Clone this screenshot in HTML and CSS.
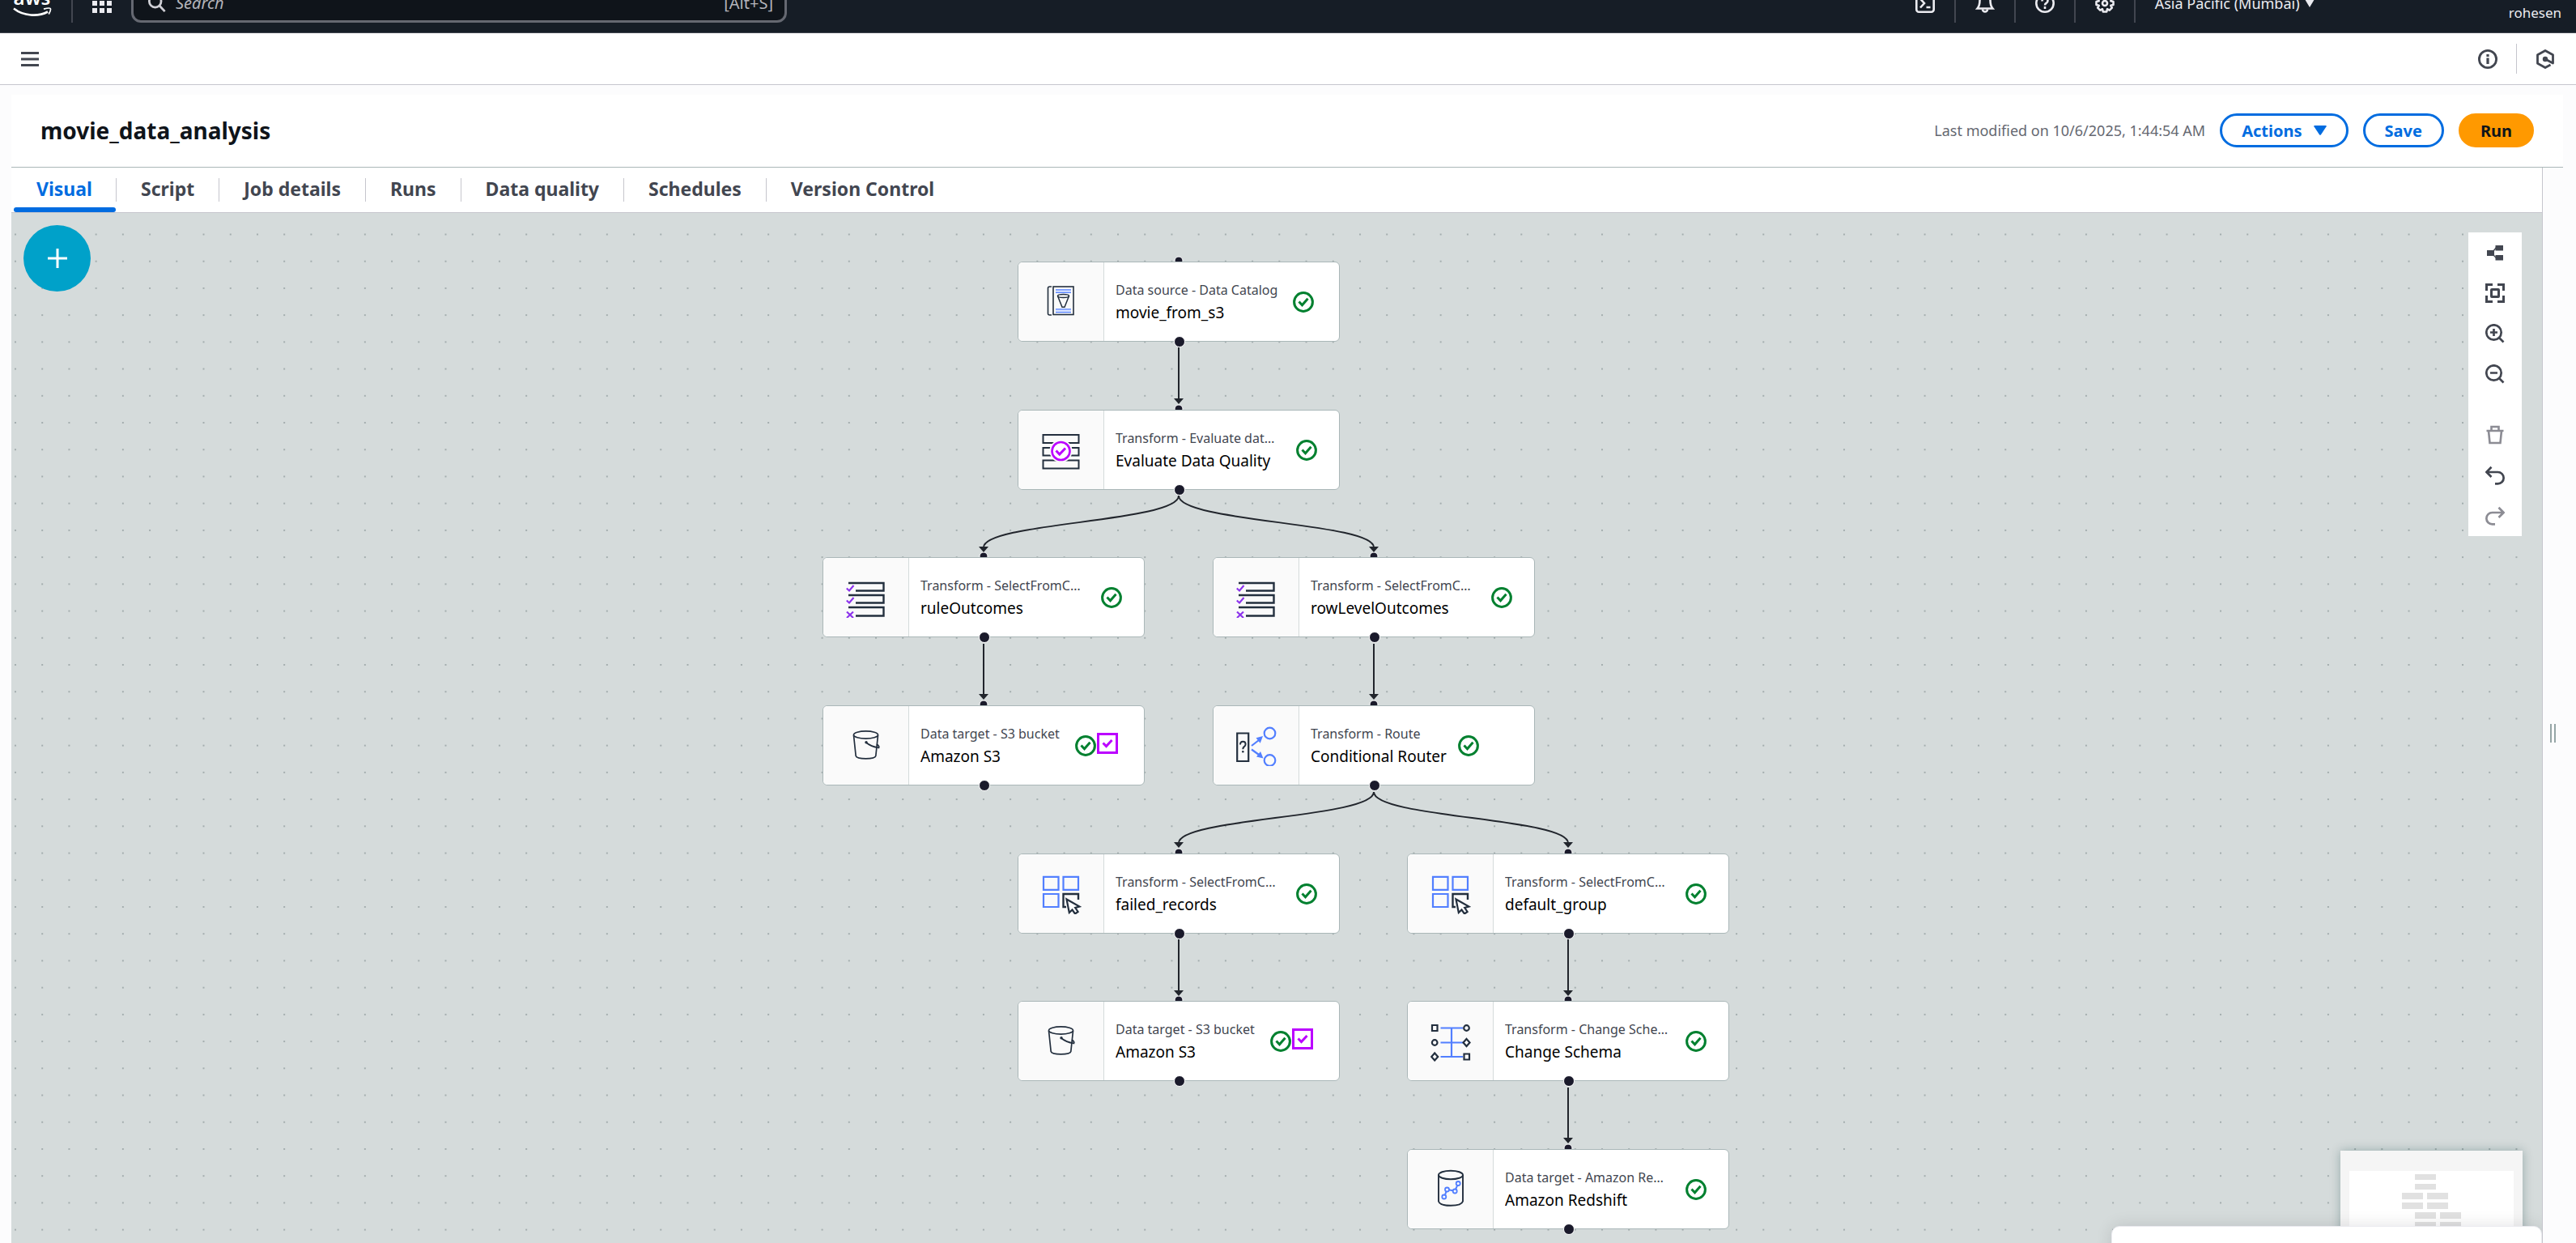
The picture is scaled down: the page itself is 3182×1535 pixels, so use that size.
FILE: index.html
```html
<!DOCTYPE html>
<html lang="en">
<head>
<meta charset="utf-8">
<title>movie_data_analysis</title>
<link rel="stylesheet" href="styles.css">
</head>
<body>
<svg class="defs" aria-hidden="true">
  <symbol id="ok" viewBox="0 0 26 26"><circle cx="13" cy="13" r="11.4" fill="none" stroke="#00802f" stroke-width="3"/><path d="M7.5 12.5l4 4.2 7-8" fill="none" stroke="#00802f" stroke-width="3"/></symbol>
  <symbol id="quality" viewBox="0 0 26 26"><rect x="1.5" y="1.5" width="23" height="23" fill="none" stroke="#b0f" stroke-width="3"/><path d="M7.5 12.5l4 4 7-7.5" fill="none" stroke="#b0f" stroke-width="3"/></symbol>
  <symbol id="catalog" viewBox="0 0 50 50"><g fill="none" stroke="#232f3e" stroke-width="1.6"><path d="M13 6h-2.500q-2 0-2 2v31q0 2 2 2H13"/><rect x="15" y="6" width="25" height="34.500"/></g><path d="M18 9.500h19v4H18zM18 34h19v3.500H18z" fill="#dbe5ff"/><path d="M18 9.800h19M18 13.400h19M18 33.800h19M18 37.600h19" stroke="#527fff" stroke-width="1.300"/><g fill="none" stroke="#232f3e" stroke-width="1.500"><ellipse cx="27.500" cy="17.500" rx="7" ry="2"/><path d="M20.500 17.500l5.500 13.700h3l5.500-13.700"/></g></symbol>
  <symbol id="evaluate" viewBox="0 0 50 50"><g fill="none" stroke="#232f3e" stroke-width="2"><path d="M2.500 6h44v10h-44zM2.500 22h44v9.500h-44zM2.500 37.500h44V47.500h-44z"/></g><circle cx="24.500" cy="26" r="14" fill="#fafafa"/><circle cx="24.500" cy="26" r="11" fill="#fff" stroke="#b0f" stroke-width="2.600"/><path d="M18.500 25.500l4.300 4.500 7.200-7.500" fill="none" stroke="#b0f" stroke-width="3"/></symbol>
  <symbol id="rules" viewBox="0 0 50 50"><g fill="none" stroke="#232f3e" stroke-width="2.400"><path d="M3 7h43.500v9.500H12M3 22h43.500v9.500H12M3 37h43.500v10.500H12"/></g><g fill="none" stroke="#8c33ec" stroke-width="2.200"><path d="M.8 13.500l3.200 3 5.500-6.500M.8 28.500l3.200 3 5.500-6.500M1 42.500l8 7.500M9 42.500l-8 7.500"/></g></symbol>
  <symbol id="bucket" viewBox="0 0 50 50"><g fill="none" stroke="#232f3e" stroke-width="1.700"><ellipse cx="24.500" cy="11.500" rx="15" ry="4.600"/><path d="M9.500 12l2.700 25.500q1 3.300 12.300 3.300t12.300-3.300L39.500 12"/><path d="M25 21c4 3.500 9 5.500 15.500 6.500q1.200-1.800-2.500-4.500"/></g><circle cx="25" cy="20.800" r="1.700" fill="#232f3e"/></symbol>
  <symbol id="router" viewBox="0 0 50 50"><path d="M1.200 9.500h14v34.500h-14z" fill="none" stroke="#232f3e" stroke-width="2.200"/><path d="M5 23.500q0-3.800 3.300-3.800t3.300 3.300q0 2-1.800 3.200-1.500 1-1.500 3" fill="none" stroke="#232f3e" stroke-width="2"/><circle cx="8.300" cy="32.200" r="1.300" fill="#232f3e"/><g fill="none" stroke="#527fff" stroke-width="2.200"><circle cx="41.500" cy="9.500" r="6.800"/><circle cx="41.500" cy="43" r="6.800"/><path d="M19 25l9-7M19 29.500l9 6.500"/></g><path d="M33 13l-8.500 2.200 5.200 6.600zM33.500 40.500l-8.500-2 5-6.600z" fill="#527fff"/></symbol>
  <symbol id="select" viewBox="0 0 50 50"><g fill="none" stroke="#527fff" stroke-width="2.200"><path d="M3 3.800h18.500v16H3zM27.500 3.800H46v16H27.500zM3 25h18.500v16H3z"/></g><path d="M31 41h-3.500V25H46v7" fill="none" stroke="#232f3e" stroke-width="2.400"/><path d="M31.500 31.500l3.300 16.500 3.700-3.500 3.500 5 3.600-2.500-3.400-5 5.300-1.500z" fill="#fff" stroke="#232f3e" stroke-width="2.200"/></symbol>
  <symbol id="schema" viewBox="0 0 50 50"><path d="M12.500 8.500H40M12.500 26.500H40M12.500 44H40M26 8.500V44" stroke="#527fff" stroke-width="2.200"/><g fill="#fff" stroke="#232f3e" stroke-width="2.200"><path d="M2 5h6.500v7H2zM41.500 40.500H48v7h-6.500zM44.500 22l4 4.500-4 4.500-4-4.500zM5.200 39.500l4 4.500-4 4.500-4-4.500z"/><circle cx="44.500" cy="8.500" r="3.300"/><circle cx="5.200" cy="26.500" r="3.300"/></g></symbol>
  <symbol id="redshift" viewBox="0 0 50 50"><g fill="none" stroke="#232f3e" stroke-width="1.900"><ellipse cx="25" cy="7" rx="15" ry="5.300"/><path d="M10 7v32.500q1.500 5.300 15 5.300t15-5.300V7"/></g><path d="M17 34l3.500-9.200 9.500 2L34.300 17.500" fill="none" stroke="#527fff" stroke-width="2"/><g fill="#fff" stroke="#527fff" stroke-width="1.800"><circle cx="16.800" cy="34" r="2.500"/><circle cx="20.500" cy="25" r="2.500"/><circle cx="30.200" cy="27" r="2.500"/><circle cx="34.200" cy="17.500" r="2.500"/></g></symbol>
</svg>

<header class="topnav">
  <a class="logo" href="#" aria-label="AWS home"><span>aws</span>
    <svg viewBox="0 0 48 14"><path d="M1 1.500C13 11 31 12 43 5.500" fill="none" stroke="#fff" stroke-width="2.600"/><path d="M38 2.200q7-2 8.200-.7t-2 7" fill="none" stroke="#fff" stroke-width="1.800"/></svg></a>
  <i class="rule"></i>
  <button class="icon" aria-label="Services"><svg viewBox="0 0 24 24" fill="#ebebf0"><path d="M0 0h6v6H0zM9 0h6v6H9zM18 0h6v6h-6zM0 9h6v6H0zM9 9h6v6H9zM18 9h6v6h-6zM0 18h6v6H0zM9 18h6v6H9zM18 18h6v6h-6z"/></svg></button>
  <label class="search">
    <svg viewBox="0 0 24 24" fill="none" stroke="#d0d0d6" stroke-width="3"><circle cx="9.500" cy="9.500" r="8"/><path d="M15 15l7.500 8"/></svg>
    <input type="search" placeholder="Search" aria-label="Search">
    <span>[Alt+S]</span>
  </label>
  <div class="tools">
    <button class="icon" aria-label="CloudShell"><svg viewBox="0 0 24 24" fill="none" stroke="#ebebf0" stroke-width="2.600"><rect x="1.300" y="1.300" width="21.400" height="21.400" rx="3"/><path d="M6 6.500l5 5.500-5 5.500M13.500 17h5"/></svg></button>
    <i class="rule"></i>
    <button class="icon" aria-label="Notifications"><svg viewBox="0 0 24 24" fill="none" stroke="#ebebf0" stroke-width="2.600"><path d="M2.500 18.500h19q-3-3.500-3-10Q18 2 12 2T5.500 8.500q0 6.500-3 10z"/><path d="M9 19.500a3 3 0 006 0"/></svg></button>
    <i class="rule"></i>
    <button class="icon" aria-label="Help"><svg viewBox="0 0 24 24" fill="none" stroke="#ebebf0" stroke-width="2.600"><circle cx="12" cy="12" r="10.700"/><path d="M8.500 9.500q0-3.500 3.500-3.500t3.500 3q0 2-2 3-1.500.8-1.500 2.500"/><path d="M10.700 17.500h2.600" stroke-width="3"/></svg></button>
    <i class="rule"></i>
    <button class="icon" aria-label="Settings"><svg viewBox="0 0 24 24" fill="none" stroke="#ebebf0" stroke-width="2.600" stroke-linejoin="round"><path d="M9.800 1.500h4.400l.8 3.200 2.800-1.400 3 3-1.500 2.900 3.200.8v4l-3.200.8 1.500 2.900-3 3-2.800-1.500-.8 3.300H9.800L9 19.200l-2.800 1.500-3-3 1.500-2.900-3.200-.8v-4l3.200-.8-1.500-2.900 3-3L9 4.700z"/><circle cx="12" cy="12" r="3"/></svg></button>
    <i class="rule"></i>
    <button class="region">Asia Pacific (Mumbai) <svg class="caret" viewBox="0 0 12 10"><path d="M0 0h12L6 10z" fill="#ebebf0"/></svg></button>
    <a class="user" href="#">rohesen</a>
  </div>
</header>

<div class="subbar">
  <button class="icon" aria-label="Open navigation"><svg viewBox="0 0 24 24"><path d="M1 3h22v3H1zM1 10.500h22v3H1zM1 18h22v3H1z" fill="#424650"/></svg></button>
  <div class="subtools">
    <button class="icon" aria-label="Info"><svg viewBox="0 0 24 24" fill="none" stroke="#424650"><circle cx="12" cy="12" r="10.600" stroke-width="2.800"/><path d="M12 10.500v7.500M12 6v3" stroke-width="3.200"/></svg></button>
    <i></i>
    <button class="icon" aria-label="Assistant"><svg viewBox="0 0 24 24" fill="none" stroke="#424650" stroke-width="2.800" stroke-linejoin="round"><path d="M18.500 19L12 22.500 2.500 17.300V6.700L12 1.500l9.500 5.200V17L12 12"/><circle cx="12" cy="12" r="1.800" fill="#424650"/></svg></button>
  </div>
</div>

<main>
  <div class="jobhead">
    <h1>movie_data_analysis</h1>
    <p>Last modified on 10/6/2025, 1:44:54 AM</p>
    <button class="btn">Actions <svg class="caret" viewBox="0 0 16 12"><path d="M1 0h14q1 0 .6 1.200L9 11.300q-1 1-2 0L.4 1.200Q0 0 1 0z" fill="#006ce0"/></svg></button>
    <button class="btn">Save</button>
    <button class="btn primary">Run</button>
  </div>
  <div class="body">
    <section class="editor">
      <nav class="tabs">
        <a class="active" href="#">Visual</a><a href="#">Script</a><a href="#">Job details</a><a href="#">Runs</a><a href="#">Data quality</a><a href="#">Schedules</a><a href="#">Version Control</a>
      </nav>
      <div class="canvas">
        <svg class="wires">
          <defs>
            <pattern id="dots" width="20" height="20" patternUnits="userSpaceOnUse" patternTransform="translate(4 25.500) scale(1.661)"><path d="M0 0h1.200v1.200H0z" fill="#a3adae"/></pattern>
          </defs>
          <rect width="100%" height="100%" fill="url(#dots)"/>
          <g class="edges">
            <path d="M1442 166V230"/>
            <path d="M1442 349C1442 382 1201 382 1201 413"/>
            <path d="M1442 349C1442 382 1683 382 1683 413"/>
            <path d="M1201 532V595"/>
            <path d="M1683 532V595"/>
            <path d="M1683 715C1683 747 1442 747 1442 778"/>
            <path d="M1683 715C1683 747 1923 747 1923 778"/>
            <path d="M1442 897V961"/>
            <path d="M1923 897V961"/>
            <path d="M1923 1080V1143"/>
          </g>
          <g class="ports">
            <circle cx="1442" cy="59" r="5"/><circle cx="1442" cy="242" r="5"/>
            <circle cx="1201" cy="424" r="5"/><circle cx="1683" cy="424" r="5"/>
            <circle cx="1201" cy="607" r="5"/><circle cx="1683" cy="607" r="5"/>
            <circle cx="1442" cy="790" r="5"/><circle cx="1923" cy="790" r="5"/>
            <circle cx="1442" cy="972" r="5"/><circle cx="1923" cy="972" r="5"/>
            <circle cx="1923" cy="1155" r="5"/>
          </g>
          <g class="heads">
            <path d="M1436 229h12l-6 7z"/><path d="M1195 412h12l-6 7z"/><path d="M1677 412h12l-6 7z"/><path d="M1195 594h12l-6 7z"/><path d="M1677 594h12l-6 7z"/><path d="M1436 777h12l-6 7z"/><path d="M1917 777h12l-6 7z"/><path d="M1436 960h12l-6 7z"/><path d="M1917 960h12l-6 7z"/><path d="M1917 1142h12l-6 7z"/>
          </g>
        </svg>

        <article class="node c2 r1"><div class="pic"><svg><use href="#catalog"/></svg></div><div class="label"><small>Data source - Data Catalog</small><b>movie_from_s3</b></div><svg class="state"><use href="#ok"/></svg></article>
        <article class="node c2 r2"><div class="pic"><svg><use href="#evaluate"/></svg></div><div class="label"><small>Transform - Evaluate data quality</small><b>Evaluate Data Quality</b></div><svg class="state"><use href="#ok"/></svg></article>
        <article class="node c1 r3"><div class="pic"><svg><use href="#rules"/></svg></div><div class="label"><small>Transform - SelectFromCollection</small><b>ruleOutcomes</b></div><svg class="state"><use href="#ok"/></svg></article>
        <article class="node c3 r3"><div class="pic"><svg><use href="#rules"/></svg></div><div class="label"><small>Transform - SelectFromCollection</small><b>rowLevelOutcomes</b></div><svg class="state"><use href="#ok"/></svg></article>
        <article class="node c1 r4"><div class="pic"><svg><use href="#bucket"/></svg></div><div class="label"><small>Data target - S3 bucket</small><b>Amazon S3</b></div><svg class="state"><use href="#ok"/></svg><svg class="state check"><use href="#quality"/></svg></article>
        <article class="node c3 r4"><div class="pic"><svg><use href="#router"/></svg></div><div class="label"><small>Transform - Route</small><b>Conditional Router</b></div><svg class="state"><use href="#ok"/></svg></article>
        <article class="node c2 r5"><div class="pic"><svg><use href="#select"/></svg></div><div class="label"><small>Transform - SelectFromCollection</small><b>failed_records</b></div><svg class="state"><use href="#ok"/></svg></article>
        <article class="node c4 r5"><div class="pic"><svg><use href="#select"/></svg></div><div class="label"><small>Transform - SelectFromCollection</small><b>default_group</b></div><svg class="state"><use href="#ok"/></svg></article>
        <article class="node c2 r6"><div class="pic"><svg><use href="#bucket"/></svg></div><div class="label"><small>Data target - S3 bucket</small><b>Amazon S3</b></div><svg class="state"><use href="#ok"/></svg><svg class="state check"><use href="#quality"/></svg></article>
        <article class="node c4 r6"><div class="pic"><svg><use href="#schema"/></svg></div><div class="label"><small>Transform - Change Schema</small><b>Change Schema</b></div><svg class="state"><use href="#ok"/></svg></article>
        <article class="node c4 r7"><div class="pic"><svg><use href="#redshift"/></svg></div><div class="label"><small>Data target - Amazon Redshift</small><b>Amazon Redshift</b></div><svg class="state"><use href="#ok"/></svg></article>

        <button class="add" aria-label="Add nodes"><svg viewBox="0 0 24 24"><path d="M0 12h24M12 0v24" stroke="#fff" stroke-width="3"/></svg></button>

        <div class="toolbar">
          <button aria-label="Auto layout"><svg viewBox="0 0 24 24"><path d="M2 9h9v7H2zM12.500 3H22v6.500h-9.500zM12.500 15H22v6.500h-9.500z" fill="#424650"/><path d="M10 10l4-5M10 15l4 4" stroke="#424650" stroke-width="1.400"/></svg></button>
          <button aria-label="Fit to screen"><svg viewBox="0 0 24 24" fill="none" stroke="#424650" stroke-width="3"><path d="M1.500 9V1.500H9M15 1.500h7.500V9M22.500 15v7.500H15M9 22.500H1.500V15"/><rect x="7.500" y="7.500" width="9" height="9" rx=".5"/></svg></button>
          <button aria-label="Zoom in"><svg viewBox="0 0 24 24" fill="none" stroke="#424650" stroke-width="2.700"><circle cx="10.500" cy="10.500" r="9.200"/><path d="M17 17l5.500 5.500M6 10.500h9M10.500 6v9"/></svg></button>
          <button aria-label="Zoom out"><svg viewBox="0 0 24 24" fill="none" stroke="#424650" stroke-width="2.700"><circle cx="10.500" cy="10.500" r="9.200"/><path d="M17 17l5.500 5.500M6 10.500h9"/></svg></button>
          <button class="apart" aria-label="Delete" disabled><svg viewBox="0 0 24 24" fill="none" stroke="#8c8c94" stroke-width="2.600"><path d="M1.500 7h21M7.500 7V2h9v5M4 7l1.500 15h13L20 7"/></svg></button>
          <button aria-label="Undo"><svg viewBox="0 0 24 24" fill="none" stroke="#424650" stroke-width="2.700"><path d="M1.800 8h13.700a7 7 0 010 14.300H12M7.500 1.800L1.500 8l6 6"/></svg></button>
          <button aria-label="Redo" disabled><svg viewBox="0 0 24 24" fill="none" stroke="#8c8c94" stroke-width="2.700"><path d="M22.200 8H8.500a7 7 0 000 14.300H12M16.500 1.800l6 6.200-6 6"/></svg></button>
        </div>

        <div class="minimap">
          <svg viewBox="0 0 203 114"><rect width="203" height="114" fill="#fff"/><path d="M81 4h26v7H81zM81 16h26v7H81zM65 27h26v8H65zM96 27h26v8H96zM65 39h26v8H65zM96 39h26v8H96zM81 51h26v8H81zM112 51h26v8h-26zM81 63h26v8H81zM112 63h26v8h-26zM112 75h26v8h-26z" fill="#e1e1e1"/></svg>
        </div>
        <div class="panel"></div>
      </div>
    </section>
    <div class="splitter"><i></i><i></i></div>
  </div>
</main>
</body>
</html>
```
FILE: styles.css
```css
* { box-sizing: border-box; }
body {
  margin: 0;
  height: 100vh;
  display: flex;
  flex-direction: column;
  overflow: hidden;
  background: #fcfcfd;
  color: #0f141a;
  font-family: "Noto Sans", "Open Sans", sans-serif;
}
button { font: inherit; color: inherit; background: none; border: 0; padding: 0; }
a { color: inherit; text-decoration: none; }
svg { display: block; flex: none; }
.defs { position: absolute; width: 0; height: 0; }
.icon, .icon svg { width: 24px; height: 24px; flex: none; }

/* Global navigation, scrolled partly out of view */
.topnav {
  flex: none;
  height: 74px;
  margin-top: -33px;
  padding: 0 18px 0 15px;
  display: flex;
  align-items: center;
  gap: 24px;
  background: #161d26;
  border-bottom: 1px solid #424650;
  color: #ebebf0;
  font-size: 17px;
}
.rule { width: 2px; height: 48px; background: #424650; flex: none; }
.logo {
  width: 49px;
  display: flex;
  flex-direction: column;
  align-items: center;
  color: #fff;
  font-size: 24px;
  font-weight: 600;
  line-height: 24px;
}
.logo svg { width: 48px; height: 14px; }
.search {
  flex: 0 1 810px;
  height: 48px;
  padding: 0 14px 0 18px;
  display: flex;
  align-items: center;
  gap: 12px;
  background: #0f141a;
  border: 3px solid #656871;
  border-radius: 12px;
  color: #b4b4bb;
  font-size: 20px;
}
.search svg { width: 22px; height: 24px; }
.search input {
  flex: 1;
  min-width: 0;
  border: 0;
  padding: 0;
  background: none;
  color: inherit;
  font: inherit;
}
.search input::placeholder { color: #b4b4bb; font-style: italic; opacity: 1; }
.tools { margin-left: auto; display: flex; align-items: center; gap: 24px; }
.region { min-width: 413px; display: flex; align-items: center; gap: 6px; font-size: 18px; }
.region .caret { width: 12px; height: 10px; }
.user { align-self: flex-end; line-height: 24px; }

.subbar {
  flex: none;
  height: 64px;
  padding: 0 26px 0 25px;
  display: flex;
  align-items: center;
  justify-content: space-between;
  background: #fff;
  border-bottom: 1px solid #c6c6cd;
}
.subtools { display: flex; align-items: center; gap: 23px; }
.subtools i { width: 1px; height: 37px; background: #c6c6cd; }

main {
  flex: 1;
  min-height: 0;
  margin: 12px 16px 0 14px;
  display: flex;
  flex-direction: column;
}
.jobhead {
  flex: none;
  height: 90px;
  padding: 0 36px 1px;
  display: flex;
  align-items: center;
  gap: 18px;
  background: #fff;
  border-bottom: 1px solid #aab7b8;
}
h1 { margin: 0 auto 0 0; font-size: 28px; font-weight: 700; }
.jobhead p { margin: 0; font-size: 18px; color: #656871; }
.btn {
  height: 42px;
  padding: 0 24px;
  display: flex;
  align-items: center;
  gap: 14px;
  border: 3px solid #006ce0;
  border-radius: 21px;
  color: #006ce0;
  font-size: 20px;
  font-weight: 700;
}
.btn .caret { width: 16px; height: 12px; }
.primary { background: #ff9900; border-color: #ff9900; color: #0f141a; }

.body { flex: 1; min-height: 0; display: flex; }
.editor {
  flex: 1;
  min-width: 0;
  display: flex;
  flex-direction: column;
  border-right: 1px solid #c6c6cd;
}
.tabs {
  flex: none;
  height: 56px;
  padding-left: 3px;
  display: flex;
  background: #fff;
  border-bottom: 1px solid #c6c6cd;
  color: #424650;
  font-size: 23px;
  font-weight: 700;
}
.tabs a {
  position: relative;
  display: flex;
  align-items: center;
  padding: 0 31px 3px 30px;
}
.tabs a:first-child { padding: 0 30px 3px 28px; }
.tabs a:not(:last-child)::before {
  content: "";
  position: absolute;
  right: 0;
  top: 13px;
  width: 1px;
  height: 29px;
  background: #c6c6cd;
}
.tabs .active { color: #006ce0; }
.tabs .active::after {
  content: "";
  position: absolute;
  left: 0;
  right: 1px;
  bottom: 0;
  height: 6px;
  border-radius: 3px;
  background: #006ce0;
}

.canvas {
  position: relative;
  flex: 1;
  min-height: 0;
  overflow: hidden;
  background: #d5dbdb;
}
.wires { position: absolute; inset: 0; width: 100%; height: 100%; }
.edges path { fill: none; stroke: #21252c; stroke-width: 2; }
.ports circle { fill: #1a1a2b; stroke: #fff; stroke-width: 1; }
.heads path { fill: #21252c; }

/* Nodes sit on a free canvas: four half-step columns, seven rows */
.node {
  position: absolute;
  width: 398px;
  height: 99px;
  display: flex;
  align-items: center;
  background: #fff;
  border: 1px solid #aab7b8;
  border-radius: 6px;
}
.node::after {
  content: "";
  position: absolute;
  left: 50%;
  bottom: -8px;
  width: 12px;
  height: 12px;
  margin-left: -6px;
  border: 1px solid #fff;
  border-radius: 50%;
  background: #1a1a2b;
}
.c1 { left: 1002px; }
.c2 { left: 1243px; }
.c3 { left: 1484px; }
.c4 { left: 1724px; }
.r1 { top: 60px; }
.r2 { top: 243px; }
.r3 { top: 425px; }
.r4 { top: 608px; }
.r5 { top: 791px; }
.r6 { top: 973px; }
.r7 { top: 1156px; }
.pic {
  flex: none;
  width: 106px;
  align-self: stretch;
  display: grid;
  place-items: center;
  background: #fafafa;
  border-right: 1px solid #d5dbdb;
  border-radius: 5px 0 0 5px;
}
.pic svg { width: 50px; height: 50px; }
.label { margin: 0 14px; max-width: 209px; }
.label small, .label b {
  display: block;
  overflow: hidden;
  white-space: nowrap;
  text-overflow: ellipsis;
  font-weight: 400;
}
.label small { padding-right: 5px; font-size: 16px; line-height: 26px; color: #424650; }
.label b { font-size: 19px; line-height: 30px; color: #000; }
.state { width: 26px; height: 26px; }
.check { margin: 0 0 6px 1px; }

.add {
  position: absolute;
  left: 15px;
  top: 15px;
  width: 83px;
  height: 82px;
  display: grid;
  place-items: center;
  border-radius: 50%;
  background: #00a1c9;
}
.add svg { width: 24px; height: 24px; }

.toolbar {
  position: absolute;
  top: 24px;
  right: 25px;
  width: 66px;
  display: flex;
  flex-direction: column;
  background: #fff;
}
.toolbar button { height: 50px; display: grid; place-items: center; }
.toolbar svg { width: 24px; height: 24px; }
.toolbar .apart { margin-top: 25px; }

.minimap {
  position: absolute;
  right: 24px;
  bottom: -50px;
  width: 225px;
  height: 164px;
  padding: 25px 11px;
  background: #f5f5f5;
  box-shadow: 0 0 12px rgba(0, 60, 60, .3);
}
.minimap svg { width: 203px; height: 114px; }
.panel {
  position: absolute;
  right: 0;
  bottom: -60px;
  width: 532px;
  height: 81px;
  background: #fff;
  border: 1px solid #ebebf0;
  border-radius: 10px;
  box-shadow: 0 0 20px rgba(0, 7, 22, .12);
}

.splitter {
  flex: none;
  width: 25px;
  padding-top: 68px;
  display: flex;
  align-items: center;
  justify-content: center;
  gap: 3px;
}
.splitter i { width: 2px; height: 23px; background: #95a5a6; }
```
